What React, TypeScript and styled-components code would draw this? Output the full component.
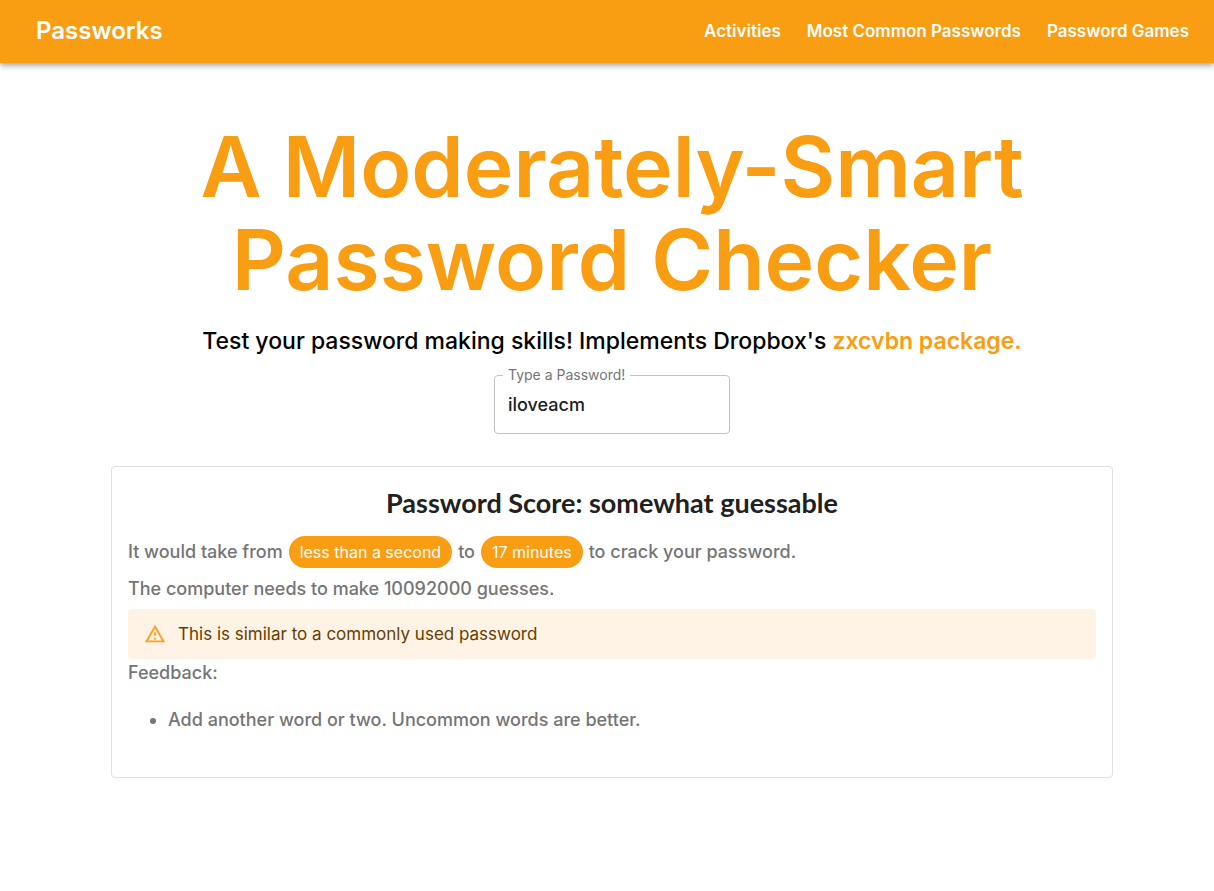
import React, { useState } from "react";
import styled, { createGlobalStyle } from "styled-components";

const orange = "#f99d13";
const bodyFont = `Inter, "Liberation Sans", sans-serif`;
const displayFont = `Inter, "Open Sans", sans-serif`;

const GlobalStyle = createGlobalStyle`
  *, *::before, *::after { box-sizing: border-box; }
  body {
    margin: 0;
    background: #fff;
    color: #212121;
    font-family: ${bodyFont};
    font-size: 18px;
    font-weight: 500;
    line-height: 28px;
  }
`;

const Header = styled.header`
  display: flex;
  align-items: center;
  justify-content: space-between;
  min-height: 63px;
  padding: 0 25px 2px 36px;
  background: ${orange};
  box-shadow: 0 2px 4px -1px rgba(0, 0, 0, 0.2), 0 4px 5px 0 rgba(0, 0, 0, 0.14),
    0 1px 10px 0 rgba(0, 0, 0, 0.12);
`;

const Brand = styled.a`
  color: #fff;
  font-size: 24px;
  font-weight: 600;
  line-height: 32px;
  text-decoration: none;
`;

const Nav = styled.nav`
  display: flex;
  gap: 26px;
`;

const NavLink = styled.a`
  color: #fff;
  font-size: 17px;
  font-weight: 600;
  line-height: 28px;
  text-decoration: none;
`;

const Main = styled.main`
  display: flex;
  flex-direction: column;
  align-items: center;
  padding: 57px 101px 48px 111px;
`;

const Title = styled.h1`
  max-width: 900px;
  margin: 0;
  color: ${orange};
  font-family: ${displayFont};
  font-size: 84px;
  font-weight: 600;
  line-height: 93px;
  text-align: center;
`;

const Subtitle = styled.p`
  margin: 18px 0 0;
  color: #000;
  font-size: 23px;
  line-height: 34px;
  text-align: center;
`;

const SubtitleLink = styled.a`
  color: ${orange};
  font-weight: 600;
  text-decoration: none;
`;

const Field = styled.fieldset`
  width: 236px;
  min-width: 0;
  margin: 7px 0 0;
  padding: 0 8px;
  border: 1px solid #c4c4c4;
  border-radius: 4px;
`;

const FieldLegend = styled.legend`
  padding: 0 5px;
  color: #757575;
  font-size: 14px;
  font-weight: 400;
  line-height: 20px;
`;

const FieldInput = styled.input`
  display: block;
  width: 100%;
  height: 48px;
  padding: 0 5px 10px;
  border: 0;
  outline: 0;
  background: transparent;
  color: #212121;
  font-family: inherit;
  font-size: 18px;
  font-weight: 500;
`;

const Card = styled.section`
  width: 100%;
  margin-top: 32px;
  padding: 16px 16px 43px;
  border: 1px solid #e0e0e0;
  border-radius: 4px;
  color: #757575;
`;

const CardTitle = styled.h2`
  margin: 0 0 13px;
  color: #212121;
  font-family: Lato, "Open Sans", sans-serif;
  font-size: 27px;
  font-weight: 700;
  line-height: 40px;
  text-align: center;
`;

const Estimate = styled.p`
  display: flex;
  flex-wrap: wrap;
  align-items: center;
  gap: 6px;
  margin: 0 0 7px;
`;

const Chip = styled.span`
  padding: 0 11px;
  border-radius: 16px;
  background: ${orange};
  color: #fff;
  font-family: ${displayFont};
  font-size: 16px;
  font-weight: 400;
  line-height: 32px;
`;

const Text = styled.p`
  margin: 0;
`;

const Alert = styled.div`
  display: flex;
  align-items: center;
  gap: 12px;
  min-height: 50px;
  margin-top: 6px;
  padding: 6px 16px;
  border-radius: 4px;
  background: #fff3e5;
  color: #663d00;
  font-family: ${displayFont};
  font-size: 17px;
  font-weight: 400;
  line-height: 24px;
`;

const WarningIcon = styled.svg`
  flex: none;
  width: 22px;
  height: 22px;
  fill: #ff9f1c;
`;

const FeedbackList = styled.ul`
  margin: 19px 0 0;
  padding-left: 40px;
`;

const navItems = ["Activities", "Most Common Passwords", "Password Games"];

export default function App() {
  const [password, setPassword] = useState("iloveacm");

  return (
    <>
      <GlobalStyle />
      <Header>
        <Brand href="#">Passworks</Brand>
        <Nav>
          {navItems.map((item) => (
            <NavLink key={item} href="#">{item}</NavLink>
          ))}
        </Nav>
      </Header>
      <Main>
        <Title>A Moderately-Smart Password Checker</Title>
        <Subtitle>
          Test your password making skills! Implements Dropbox's{" "}
          <SubtitleLink href="#">zxcvbn package.</SubtitleLink>
        </Subtitle>
        <Field>
          <FieldLegend>
            <label htmlFor="password">Type a Password!</label>
          </FieldLegend>
          <FieldInput
            id="password"
            type="text"
            value={password}
            onChange={(e) => setPassword(e.target.value)}
          />
        </Field>
        <Card>
          <CardTitle>Password Score: somewhat guessable</CardTitle>
          <Estimate>
            <span>It would take from</span>
            <Chip>less than a second</Chip>
            <span>to</span>
            <Chip>17 minutes</Chip>
            <span>to crack your password.</span>
          </Estimate>
          <Text>The computer needs to make 10092000 guesses.</Text>
          <Alert role="alert">
            <WarningIcon viewBox="0 0 24 24" aria-hidden="true">
              <path d="M12 5.99L19.53 19H4.47L12 5.99M12 2L1 21h22L12 2zm1 14h-2v2h2v-2zm0-6h-2v4h2v-4z" />
            </WarningIcon>
            <span>This is similar to a commonly used password</span>
          </Alert>
          <Text>Feedback:</Text>
          <FeedbackList>
            <li>Add another word or two. Uncommon words are better.</li>
          </FeedbackList>
        </Card>
      </Main>
    </>
  );
}
